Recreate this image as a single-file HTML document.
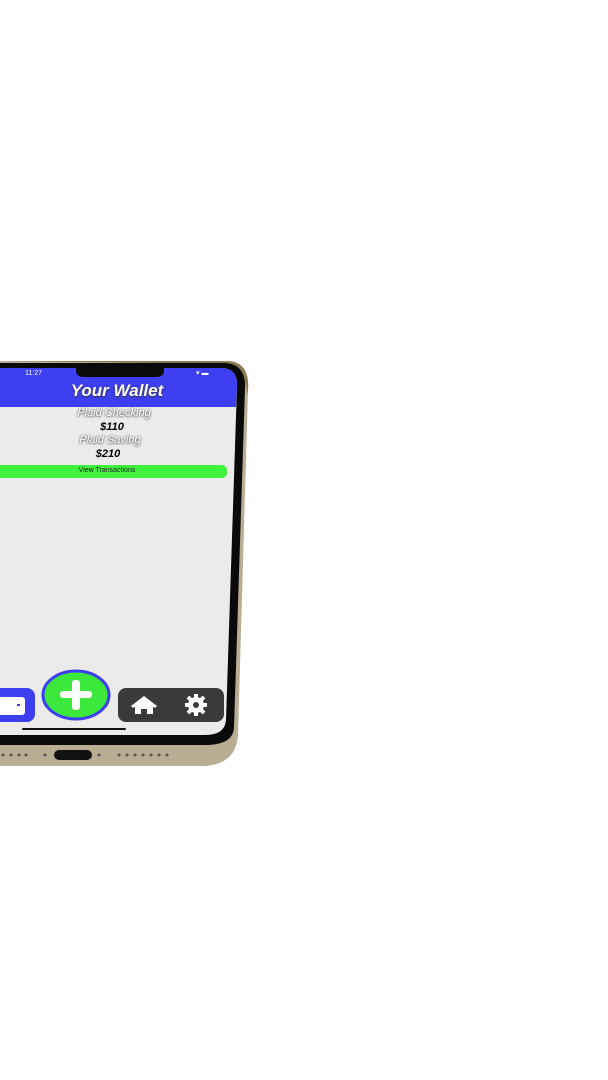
<!DOCTYPE html>
<html><head><style>
body{margin:0;width:608px;height:1080px;background:#fff;position:relative;overflow:hidden;font-family:"Liberation Sans",sans-serif}
.a{position:absolute}
.t{color:#fff;text-shadow:0 0 2px #555,0 1px 2px #777;font-style:italic}
</style></head><body>
<svg class="a" style="left:0;top:0" width="608" height="1080">
<path d="M0,361 L228,361 Q250,362 248,390 L238,735 Q236,764 205,766 L0,766 Z" fill="#b9ad93"/>
<path d="M0,361 L228,361 Q250,362 248,390 L247,395 Q246,370 228,364 Z" fill="#8a7a50"/>
<path d="M0,363 L226,363 Q246,365 245,388 L234,728 Q233,744 208,745 L0,745 Z" fill="#0a0a0a"/>
<path d="M0,368 L222,368 Q238,369 237,386 L226,720 Q225,735 205,735 L0,735 Z" fill="#ebebeb"/>
<path d="M0,368 L222,368 Q238,369 237,386 L236,407 L0,407 Z" fill="#3d3ff0"/>
<path d="M76,363 L164,363 L164,370 Q164,377 156,377 L84,377 Q76,377 76,370 Z" fill="#0a0a0a"/>
<rect x="22" y="728" width="104" height="2" rx="1" fill="#111"/>
<rect x="54" y="750" width="38" height="10" rx="5" fill="#111"/>
<g fill="#555"><circle cx="3" cy="755" r="1.5"/><circle cx="11" cy="755" r="1.5"/><circle cx="19" cy="755" r="1.5"/><circle cx="26" cy="755" r="1.5"/><circle cx="45" cy="755" r="1.5"/><circle cx="99" cy="755" r="1.5"/><circle cx="119" cy="755" r="1.5"/><circle cx="127" cy="755" r="1.5"/><circle cx="135" cy="755" r="1.5"/><circle cx="143" cy="755" r="1.5"/><circle cx="151" cy="755" r="1.5"/><circle cx="159" cy="755" r="1.5"/><circle cx="167" cy="755" r="1.5"/></g>
<rect x="-10" y="688" width="45" height="34" rx="8" fill="#3d3ff0"/>
<rect x="-5" y="697" width="30" height="18" rx="3" fill="#fff"/>
<rect x="17" y="704" width="3" height="2" fill="#3d3ff0"/>
<ellipse cx="76" cy="695" rx="33" ry="24" fill="#3de83d" stroke="#3d3ff0" stroke-width="3"/>
<rect x="60" y="691" width="32" height="7" rx="3" fill="#fff"/>
<rect x="72" y="680" width="8" height="30" rx="3" fill="#fff"/>
<rect x="118" y="688" width="106" height="34" rx="8" fill="#3a3a3a"/>
<path d="M131,706 L144,696 L157,706 L155,708 L144,700 L133,708 Z" fill="#fff"/>
<path d="M135,706 L144,700 L153,706 L153,714 L147,714 L147,709 L141,709 L141,714 L135,714 Z" fill="#fff"/>
<circle cx="196" cy="705" r="8" fill="#fff"/>
<g stroke="#fff" stroke-width="4"><line x1="196" y1="694" x2="196" y2="716"/><line x1="185" y1="705" x2="207" y2="705"/><line x1="188" y1="697" x2="204" y2="713"/><line x1="204" y1="697" x2="188" y2="713"/></g>
<circle cx="196" cy="705" r="3" fill="#3a3a3a"/>
<rect x="-5" y="465" width="232" height="13" rx="5" fill="#3ef23e"/>
</svg>
<div class="a" style="left:25px;top:370px;font-size:7px;color:#fff">11:27</div>
<div class="a" style="left:196px;top:369px;font-size:7px;color:#fff">▾ ▬</div>
<div class="a" style="left:0;width:234px;top:381px;text-align:center;font-size:17px;font-weight:bold;font-style:italic;color:#fff;text-shadow:0 1px 2px #333">Your Wallet</div>
<div class="a t" style="left:0;width:228px;top:407px;text-align:center;font-size:11px">Plaid Checking</div>
<div class="a" style="left:0;width:224px;top:421px;text-align:center;font-size:11px;font-weight:bold;font-style:italic">$110</div>
<div class="a t" style="left:0;width:220px;top:434px;text-align:center;font-size:11px">Plaid Saving</div>
<div class="a" style="left:0;width:216px;top:448px;text-align:center;font-size:11px;font-weight:bold;font-style:italic">$210</div>
<div class="a" style="left:0;width:214px;top:467px;text-align:center;font-size:7px;color:#222">View Transactions</div>
</body></html>
